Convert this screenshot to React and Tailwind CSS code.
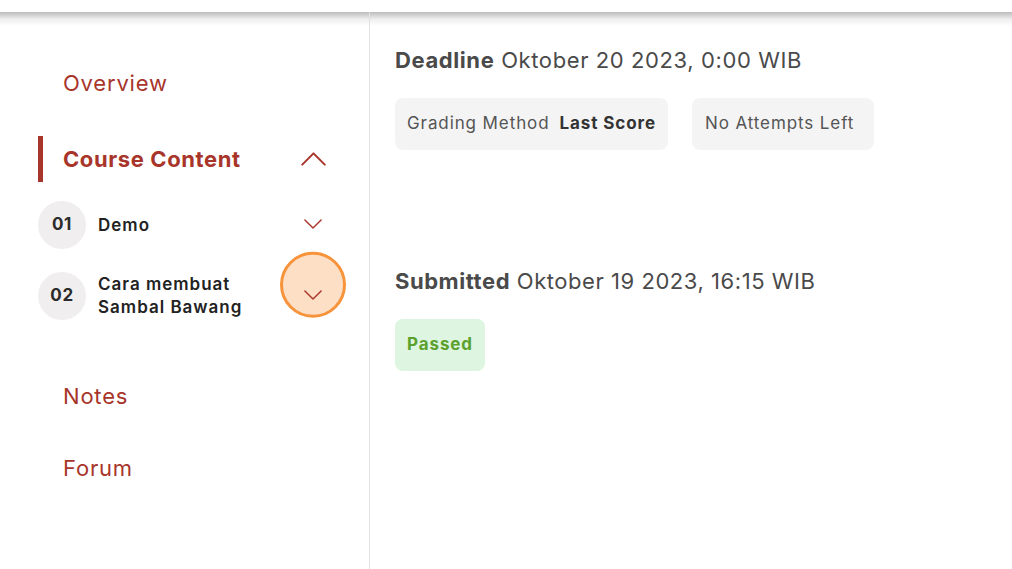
const NAV_RED = 'text-[#a8352a]';

const Chevron = ({ up, className }) => (
  <svg viewBox="0 0 20 11" fill="none" className={className}>
    <polyline
      points={up ? '1,10 10,1 19,10' : '1,1 10,10 19,1'}
      stroke="currentColor"
      strokeWidth="1.6"
      strokeLinecap="round"
      strokeLinejoin="round"
    />
  </svg>
);

const LessonRow = ({ number, title, highlighted }) => (
  <div className="flex items-center gap-3 pl-[38px] pr-[43px]">
    <div className="flex h-12 w-12 shrink-0 items-center justify-center rounded-full bg-[#f0eeee] text-[17px] font-bold tracking-[0.6px] text-[#2b2b2b]">
      {number}
    </div>
    <div className="flex-1 text-[17px] font-semibold leading-[23px] tracking-[1px] text-[#222]">
      {title}
    </div>
    <div className="relative flex h-6 w-[26px] items-center justify-center">
      {highlighted ? (
        <span className="absolute left-1/2 top-1/2 h-[66px] w-[66px] -translate-x-1/2 -translate-y-[67%] rounded-full border-[3px] border-[#f7933a] bg-[#fddfc6]" />
      ) : null}
      <Chevron className={`relative h-[10px] w-[18px] -translate-y-[1px] ${NAV_RED}`} />
    </div>
  </div>
);

export default function App() {
  return (
    <div
      className="flex h-[569px] w-[1012px] flex-col overflow-hidden bg-white"
      style={{ fontFamily: 'Inter, "Noto Sans", sans-serif' }}
    >
      <div className="h-3 shrink-0 bg-white" />
      <div className="relative flex flex-1">
        <div className="pointer-events-none absolute inset-x-0 top-0 h-[14px] bg-gradient-to-b from-[#b5b5b5]/90 via-[#dcdcdc]/50 to-transparent" />

        <aside className="relative z-10 w-[370px] shrink-0 border-r border-[#e2e2e2] pt-[57px]">
          <div className={`pl-[63px] text-[22px] leading-7 tracking-[0.8px] ${NAV_RED}`}>Overview</div>

          <div className="mt-[39px] flex h-[46px] items-center pr-[43px]">
            <div className="ml-[38px] h-[46px] w-[5px] bg-[#a8352a]" />
            <div className={`flex-1 pl-5 text-[22px] font-bold tracking-[0.6px] ${NAV_RED}`}>Course Content</div>
            <Chevron up className={`h-[14px] w-[25px] ${NAV_RED}`} />
          </div>

          <div className="mt-[19px] flex flex-col gap-[23px]">
            <LessonRow number="01" title="Demo" />
            <LessonRow number="02" title={<>Cara membuat<br />Sambal Bawang</>} highlighted />
          </div>

          <div className={`mt-[62px] pl-[63px] text-[22px] leading-7 tracking-[0.8px] ${NAV_RED}`}>Notes</div>
          <div className={`mt-11 pl-[63px] text-[22px] leading-7 tracking-[0.8px] ${NAV_RED}`}>Forum</div>
        </aside>

        <main className="flex-1 pl-[25px] pt-[34px] text-[#4a4a4a]">
          <div className="text-[22px] leading-7 tracking-[0.6px]">
            <span className="font-bold">Deadline</span> Oktober 20 2023, 0:00 WIB
          </div>
          <div className="mt-[24px] flex gap-6">
            <div className="flex h-[52px] items-center gap-2.5 rounded-lg bg-[#f4f4f4] px-3 text-[17px] tracking-[0.9px] text-[#555]">
              Grading Method <span className="font-bold text-[#333]">Last Score</span>
            </div>
            <div className="flex h-[52px] items-center rounded-lg bg-[#f4f4f4] pl-[13px] pr-5 text-[17px] tracking-[0.9px] text-[#555]">
              No Attempts Left
            </div>
          </div>

          <div className="mt-[117px] text-[22px] leading-7 tracking-[0.55px]">
            <span className="font-bold">Submitted</span> Oktober 19 2023, 16:15 WIB
          </div>
          <div className="mt-[24px] flex">
            <div className="flex h-[52px] items-center rounded-lg bg-[#ddf5e1] px-3 text-[17px] font-bold tracking-[0.9px] text-[#5ca12e]">
              Passed
            </div>
          </div>
        </main>
      </div>
    </div>
  );
}
